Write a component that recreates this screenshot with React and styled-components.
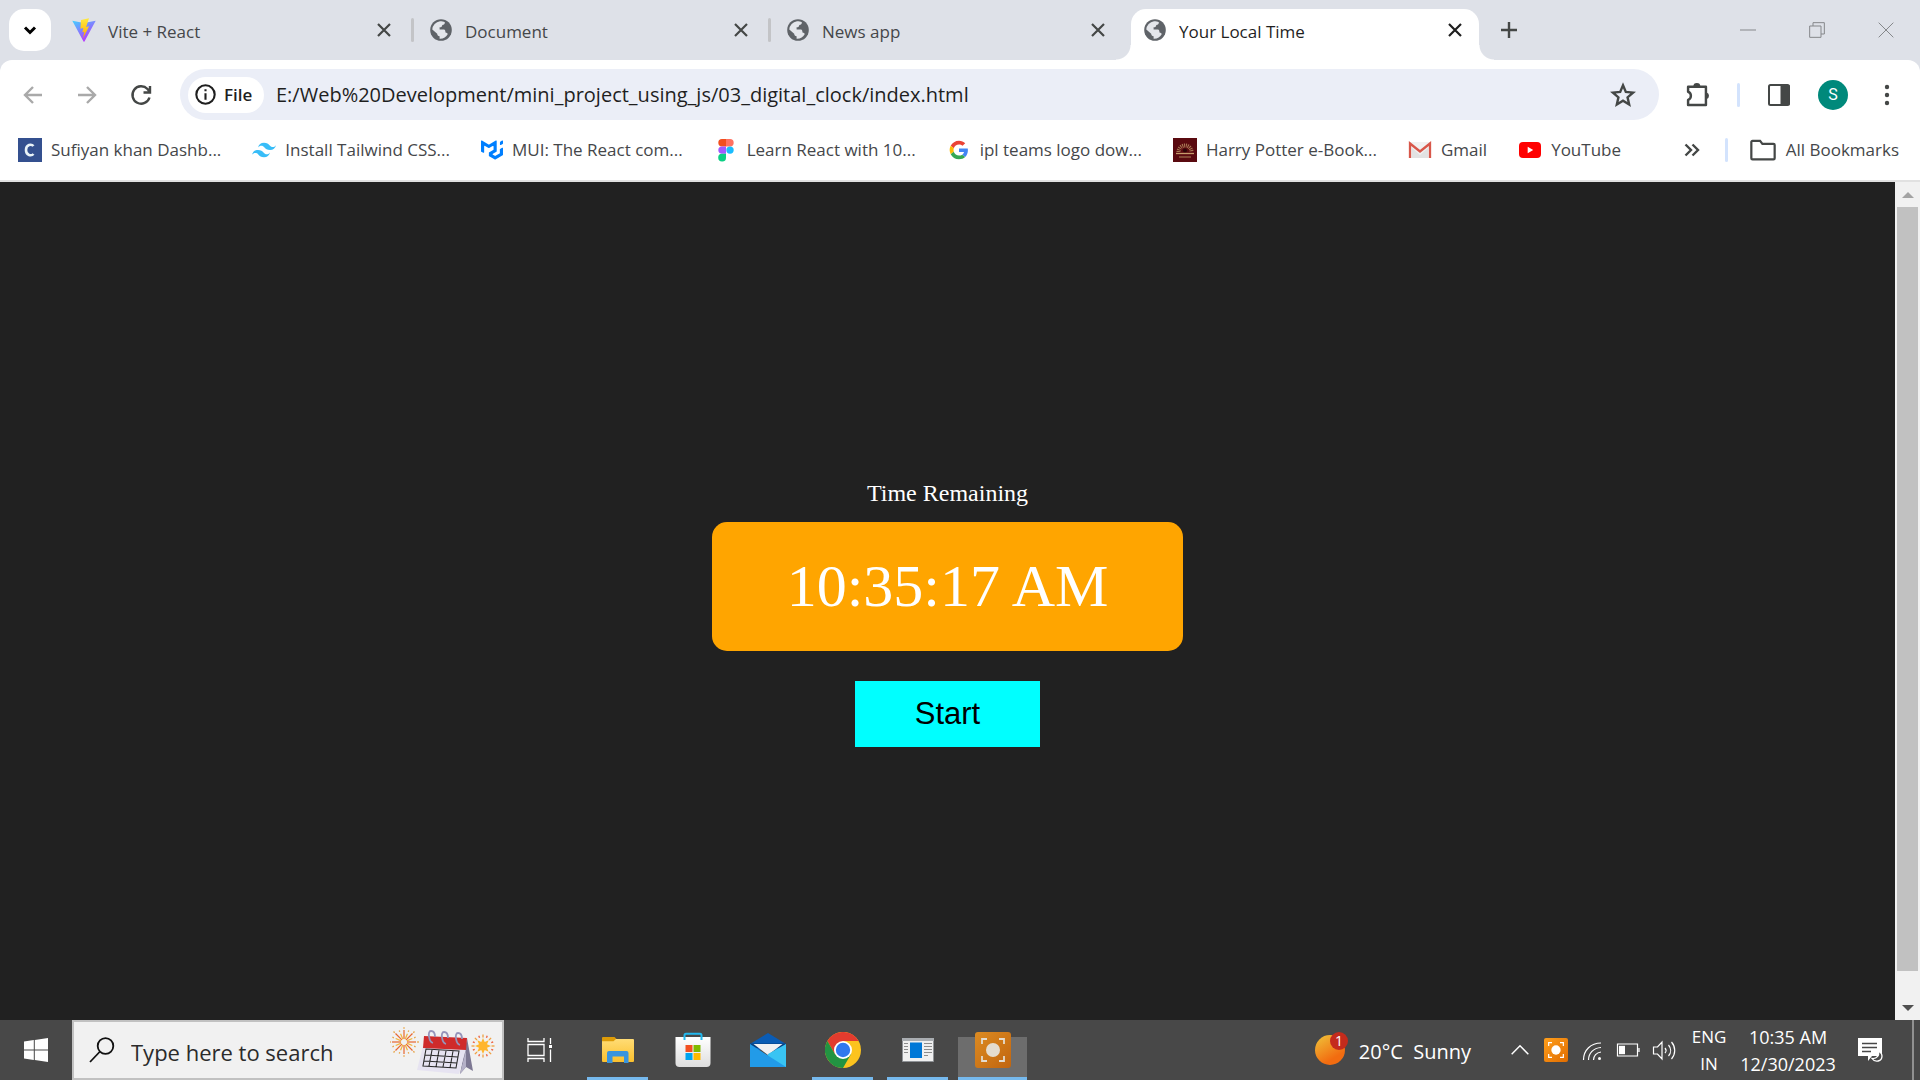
import React from "react";
import styled, { createGlobalStyle } from "styled-components";
import { SiMui } from "react-icons/si";

const GlobalStyle = createGlobalStyle`
  *, *::before, *::after { box-sizing: border-box; }
  body { margin: 0; font-family: "Open Sans", "Noto Sans", sans-serif; }
  button, input { font: inherit; color: inherit; }
  button { border: 0; padding: 0; background: none; }
  svg { display: block; flex: none; }
`;

const Desktop = styled.div`
  display: flex;
  flex-direction: column;
  height: 100vh;
  background: #212121;
  overflow: hidden;
`;

/* ---------- Tab strip ---------- */
const TabStrip = styled.header`
  display: flex;
  align-items: flex-end;
  height: 60px;
  flex: none;
  padding-left: 9px;
  background: #dee1e8;
`;
const TabSearch = styled.button`
  display: grid;
  place-items: center;
  width: 42px;
  height: 42px;
  margin-bottom: 9px;
  border-radius: 15px;
  background: #fff;
`;
const Tabs = styled.nav`
  display: flex;
  align-items: flex-end;
  flex: 0 1 1437px;
  min-width: 0;
  padding-left: 9px;
`;
const Tab = styled.div`
  position: relative;
  display: flex;
  align-items: center;
  gap: 12px;
  flex: 1 1 0;
  min-width: 0;
  height: 51px;
  padding: 0 12px 9px;
  color: ${(p) => (p.$active ? "#1f1f1f" : "#45474a")};
  background: ${(p) => (p.$active ? "#fff" : "transparent")};
  border-radius: 15px 15px 0 0;
  ${(p) =>
    p.$active &&
    `&::before, &::after {
      content: ""; position: absolute; bottom: 0; width: 15px; height: 15px;
    }
    &::before { right: 100%; background: radial-gradient(circle at 0 0, transparent 14px, #fff 15px); }
    &::after { left: 100%; background: radial-gradient(circle at 100% 0, transparent 14px, #fff 15px); }`}
`;
const TabTitle = styled.span`
  flex: 1;
  min-width: 0;
  padding-top: 3px;
  overflow: hidden;
  font-size: 17px;
  line-height: 24px;
  white-space: nowrap;
`;
const TabDivider = styled.span`
  flex: none;
  width: 3px;
  height: 24px;
  margin: 0 3px 18px;
  border-radius: 2px;
  background: ${(p) => (p.$hidden ? "transparent" : "#c3c4c7")};
`;
const IconButton = styled.button`
  display: grid;
  place-items: center;
  flex: none;
  width: ${(p) => p.$w || 24}px;
  height: ${(p) => p.$h || 24}px;
  color: ${(p) => p.$color || "#444746"};
`;
const WindowControls = styled.div`
  display: flex;
  margin-left: auto;
`;

/* ---------- Toolbar ---------- */
const Corners = styled.div`
  flex: none;
  background: #dee1e8;
`;
const Chrome = styled.div`
  background: #fff;
  border-radius: 12px 12px 0 0;
  border-bottom: 2px solid #e1e1e1;
`;
const Toolbar = styled.div`
  display: flex;
  align-items: center;
  height: 69px;
  padding: 0 6px;
`;
const AddressBar = styled.form`
  display: flex;
  align-items: center;
  flex: 1;
  height: 51px;
  margin: 0 12px;
  padding: 0 18px 0 8px;
  border-radius: 26px;
  background: #ebeef7;
`;
const FileChip = styled.button`
  display: flex;
  align-items: center;
  gap: 8px;
  width: 76px;
  height: 36px;
  padding-left: 7px;
  border-radius: 18px;
  background: #fff;
  color: #1f1f1f;
  font-size: 17px;
  font-weight: 600;
`;
const UrlInput = styled.input`
  flex: 1;
  min-width: 0;
  height: 36px;
  padding: 0 12px;
  border: 0;
  background: none;
  color: #1f1f1f;
  font-size: 20px;
`;
const BlueDivider = styled.span`
  flex: none;
  width: 3px;
  height: 24px;
  margin: 0 ${(p) => p.$right}px 0 ${(p) => p.$left}px;
  border-radius: 2px;
  background: #d3e3fd;
`;
const Avatar = styled.span`
  display: grid;
  place-items: center;
  width: 30px;
  height: 30px;
  border-radius: 50%;
  background: #00897b;
  color: #fff;
  font-family: Roboto, sans-serif;
  font-size: 16px;
`;
const BookmarksBar = styled.nav`
  display: flex;
  align-items: center;
  height: 51px;
  padding: 0 21px 9px 18px;
`;
const BookmarkList = styled.div`
  display: flex;
  flex: 1;
  gap: 31px;
  min-width: 0;
`;
const Bookmark = styled.a`
  display: flex;
  align-items: center;
  gap: 9px;
  color: #45474a;
  font-size: 17px;
  line-height: 24px;
  white-space: nowrap;
  text-decoration: none;
`;

/* ---------- Page ---------- */
const Viewport = styled.main`
  display: flex;
  flex: 1;
  min-height: 0;
`;
const Page = styled.section`
  display: flex;
  flex: 1;
  flex-direction: column;
  align-items: center;
  justify-content: center;
  color: #fff;
  font-family: "Liberation Serif", serif;
`;
const Caption = styled.p`
  margin: 24px 0 15px;
  font-size: 24px;
  line-height: 28px;
`;
const Clock = styled.time`
  padding: 30px 75px;
  border-radius: 15px;
  background: orange;
  font-size: 60px;
  line-height: 69px;
`;
const StartButton = styled.button`
  margin-top: 30px;
  padding: 15px 60px;
  background: cyan;
  color: #000;
  font-family: "Liberation Sans", sans-serif;
  font-size: 31px;
  line-height: 36px;
`;
const Scrollbar = styled.div`
  display: flex;
  flex-direction: column;
  width: 25px;
  padding: 0 2px;
  background: #f1f1f1;
`;
const ScrollArrow = styled.button`
  display: grid;
  place-items: center;
  height: 25px;
  flex: none;
  color: ${(p) => p.$color};
`;
const ScrollTrack = styled.div`
  flex: 1;
`;
const ScrollThumb = styled.div`
  height: 97%;
  background: #c1c1c1;
`;

/* ---------- Taskbar ---------- */
const Taskbar = styled.footer`
  display: flex;
  align-items: stretch;
  flex: none;
  height: 60px;
  background: #484848;
  color: #fff;
`;
const TaskButton = styled.button`
  display: grid;
  place-items: center;
  width: ${(p) => p.$w || 75}px;
`;
const SearchBox = styled.label`
  display: flex;
  align-items: center;
  gap: 16px;
  width: 432px;
  padding: 0 6px 0 15px;
  border: 2px solid #c1c1c1;
  background: #f1f1f1;
  color: #1f1f1f;
`;
const SearchInput = styled.input`
  flex: 1;
  min-width: 0;
  padding: 3px 0 0;
  border: 0;
  background: none;
  font-size: 22px;
  &::placeholder { color: #2b2b2b; opacity: 1; }
`;
const Apps = styled.div`
  display: flex;
  margin-left: 5px;
`;
const AppButton = styled.button`
  display: grid;
  place-items: center;
  width: ${(p) => (p.$active ? 69 : 61)}px;
  margin: 0 ${(p) => (p.$active ? 3 : 7)}px;
  padding-top: 3px;
  border-bottom: 3px solid ${(p) => (p.$open ? "#76b9ed" : "transparent")};
  background: ${(p) => (p.$active ? "linear-gradient(transparent 17px, #6d6d6d 17px)" : "none")};
`;
const Tray = styled.div`
  display: flex;
  align-items: center;
  margin-left: auto;
`;
const Weather = styled.button`
  display: flex;
  align-items: center;
  gap: 9px;
  margin-right: 31px;
  font-size: 20px;
`;
const WeatherText = styled.span`
  padding-top: 3px;
  white-space: pre;
`;
const TrayIcon = styled.button`
  display: grid;
  place-items: center;
  width: 36px;
  height: 60px;
`;
const TrayText = styled.button`
  display: flex;
  flex-direction: column;
  align-items: center;
  gap: 3px;
  width: ${(p) => p.$w}px;
  padding-top: 1px;
  font-size: ${(p) => p.$size}px;
  line-height: 24px;
  white-space: nowrap;
`;
const ShowDesktop = styled.button`
  width: 8px;
  height: 60px;
  margin-left: 12px;
  border-left: 2px solid #909090;
`;

/* ---------- Icons ---------- */
const Line = ({ s = 24, w = 2, children, ...rest }) => (
  <svg width={s} height={s} viewBox="0 0 24 24" fill="none" stroke="currentColor" strokeWidth={w} {...rest}>
    {children}
  </svg>
);
const CloseIcon = () => <Line s={24} w={2.2}><path d="M6 6l12 12M18 6L6 18" /></Line>;
const Globe = () => (
  <svg width="24" height="24" viewBox="0 0 24 24">
    <circle cx="12" cy="12" r="10.8" fill="#5f6368" />
    <path fill="#e4e6eb" d="M11 3.2c2 0 3.500.3 4.900 1-.1 1.800-.9 2.600-2.600 2.700-.2 1.800-1 2.400-2.700 2.300v2.300h4.200c1.500.2 1.600 1.600 1.700 3 1.200.1 1.900.6 2.300 1.600a8.800 8.800 0 0 1-8.200 4.700v-2.500c-1.600-.2-2.300-.9-2.400-2.500L3.300 11.500A8.800 8.800 0 0 1 11 3.200z" />
  </svg>
);
const ViteIcon = () => (
  <svg width="24" height="24" viewBox="0 0 24 24">
    <defs>
      <linearGradient id="vite" x1="0" y1="0" x2=".6" y2="1"><stop stopColor="#41d1ff" /><stop offset="1" stopColor="#bd34fe" /></linearGradient>
      <linearGradient id="bolt" x1="0" y1="0" x2="0" y2="1"><stop stopColor="#ffea3d" /><stop offset="1" stopColor="#ffa800" /></linearGradient>
    </defs>
    <path fill="url(#vite)" d="M.3 2.800 12 4.900l11.700-2.100L12.500 23.400a.6.6 0 0 1-1 0z" />
    <path fill="url(#bolt)" d="M17 .3 9 1.900 8.400 10.700l2.900-.6-.9 4.200 2-.6-1.500 6.800 6.200-12.200-3 .6z" />
  </svg>
);
const CIcon = () => (
  <svg width="24" height="24" viewBox="0 0 24 24">
    <path fill="#34508f" d="M0 0h24v24H0z" />
    <path d="M15.500 8C13.500 5.800 8 6.200 8 12s5.500 6.200 7.500 4" fill="none" stroke="#e9f3f8" strokeWidth="2.600" />
  </svg>
);
const TailwindIcon = () => (
  <svg width="24" height="24" viewBox="0 0 24 24" fill="#38bdf8">
    <path d="M12 4.800c-3.200 0-5.200 1.600-6 4.800 1.200-1.600 2.600-2.200 4.200-1.800.9.2 1.600.9 2.300 1.700C13.700 10.700 15 12 18 12c3.200 0 5.200-1.600 6-4.800-1.200 1.600-2.600 2.200-4.200 1.800-.9-.2-1.600-.9-2.300-1.700C16.300 6.100 15 4.800 12 4.800zM6 12c-3.200 0-5.200 1.600-6 4.800 1.200-1.600 2.600-2.200 4.200-1.800.9.2 1.600.9 2.300 1.700C7.700 17.900 9 19.200 12 19.200c3.200 0 5.200-1.600 6-4.800-1.200 1.600-2.600 2.200-4.200 1.800-.9-.2-1.600-.9-2.300-1.700C10.300 13.300 9 12 6 12z" />
  </svg>
);
const FigmaIcon = () => (
  <svg width="24" height="24" viewBox="0 0 24 24">
    <path fill="#f24e1e" d="M12 1H8a3.700 3.700 0 0 0 0 7.400h4z" />
    <path fill="#ff7262" d="M12 1h4a3.700 3.700 0 0 1 0 7.400h-4z" />
    <path fill="#a259ff" d="M12 8.400H8a3.700 3.700 0 0 0 0 7.400h4z" />
    <circle cx="16" cy="12.100" r="3.700" fill="#1abcfe" />
    <path fill="#0acf83" d="M8 15.800h4v3.700A3.900 3.900 0 1 1 8 15.800z" />
  </svg>
);
const GoogleIcon = () => (
  <svg width="24" height="24" viewBox="-7 -7 62 62">
    <path fill="#ea4335" d="M24 9.500c3.540 0 6.710 1.220 9.210 3.600l6.850-6.850C35.900 2.380 30.470 0 24 0 14.620 0 6.510 5.380 2.560 13.220l7.980 6.190C12.430 13.720 17.740 9.500 24 9.500z" />
    <path fill="#4285f4" d="M46.980 24.550c0-1.570-.15-3.090-.38-4.550H24v9.020h12.940c-.58 2.960-2.260 5.480-4.780 7.180l7.730 6c4.510-4.180 7.090-10.360 7.090-17.650z" />
    <path fill="#fbbc05" d="M10.530 28.590a14.500 14.500 0 0 1 0-9.180l-7.980-6.190a24 24 0 0 0 0 21.560z" />
    <path fill="#34a853" d="M24 48c6.480 0 11.930-2.130 15.890-5.810l-7.730-6c-2.150 1.450-4.920 2.300-8.160 2.300-6.260 0-11.570-4.220-13.470-9.910l-7.980 6.190C6.510 42.620 14.620 48 24 48z" />
  </svg>
);
const BookIcon = () => (
  <svg width="24" height="24" viewBox="0 0 24 24">
    <path fill="#5a0a10" d="M0 0h24v24H0z" />
    <path d="M5.500 14a6.500 6.500 0 1 1 13 0" fill="none" stroke="#a87854" strokeWidth="4" strokeDasharray="1 .8" />
    <circle cx="12" cy="12.500" r="2" fill="#2c0508" />
    <path d="M3 15.500h18" stroke="#c79c6c" strokeWidth="1.300" />
    <path d="M6 19h12" stroke="#9a6a4a" strokeWidth="1.300" />
  </svg>
);
const GmailIcon = () => (
  <svg width="24" height="24" viewBox="0 0 24 24">
    <path fill="#f1f1f1" d="M2 4h20v16H2z" />
    <path d="M4 10l8 7 8-7v10H4z" fill="#e2e2e2" />
    <path d="M2 20V5.500l10 8 10-8V20" fill="none" stroke="#d8574a" strokeWidth="2.300" />
  </svg>
);
const YoutubeIcon = () => (
  <svg width="24" height="24" viewBox="0 0 24 24">
    <rect x="1" y="4" width="22" height="16" rx="4" fill="#f00" />
    <path fill="#fff" d="M9.700 8.800v6.400l5.500-3.200z" />
  </svg>
);
const WindowsIcon = () => (
  <svg width="24" height="24" viewBox="0 0 24 24" fill="#fff">
    <path d="M0 3.400 9.800 2v9.500H0zM10.800 1.900 24 0v11.500H10.800zM0 12.500h9.800V22L0 20.600zM10.800 12.500H24V24l-13.200-1.900z" />
  </svg>
);
const SearchArt = () => (
  <svg width="106" height="52" viewBox="0 0 106 52">
    <g fill="none">
      {Array.from({ length: 16 }, (_, i) => (
        <path key={i} transform={`rotate(${i * 22.5} 14 18)`} d={i % 2 ? "M14 15V9" : "M14 15V6"} stroke={i % 2 ? "#f2b33c" : "#e8672f"} strokeWidth="1.200" />
      ))}
      {Array.from({ length: 16 }, (_, i) => (
        <path key={i} transform={`rotate(${i * 22.5} 14 18)`} d={i % 2 ? "M14 7V5.500" : "M14 4.800V3.200"} stroke="#e8a23f" strokeWidth="1.300" />
      ))}
      {Array.from({ length: 16 }, (_, i) => (
        <path key={i} transform={`rotate(${i * 22.5} 93 22)`} d={i % 2 ? "M93 13v-2" : "M93 13.500v-3"} stroke={i % 2 ? "#ee5b38" : "#f0a040"} strokeWidth="1.300" />
      ))}
    </g>
    <path fill="#ffb62e" d="M93 14l1.700 4 4-1.700-1.700 4 4 1.700-4 1.700 1.700 4-4-1.700-1.700 4-1.700-4-4 1.700 1.700-4-4-1.700 4-1.700-1.700-4 4 1.700z" />
    <path fill="#7d7893" d="m77 14 6 33-7-4-6 7z" />
    <path fill="#b5b1c8" d="m76 26-6 24 6-7z" />
    <path fill="#e6e3f1" d="M33 22l43 3-7 25-42-4z" />
    <path fill="#cf2b2b" d="m34 12 43 2-1 12-43-2z" />
    <path d="m36 25 33 2-3 17-33-2zM35 31l33 2M34 37l33 2M42 26l-3 16M49 26l-3 17M56 27l-3 16M63 27l-3 17" fill="none" stroke="#2a2a2a" strokeWidth="1.100" />
    <path d="M43 19c-4-1-6-12-2-12 3 0 4 3 4 6M56 20c-4-1-6-12-2-12 3 0 4 3 4 6M70 21c-4-1-6-12-2-12 3 0 4 3 4 6" fill="none" stroke="#9694ba" strokeWidth="1.800" />
  </svg>
);
const TaskViewIcon = () => (
  <svg width="26" height="26" viewBox="0 0 26 26" fill="none" stroke="#fff" strokeWidth="1.300">
    <path d="M1 1v3.500h16V1M1 25v-3.500h16V25M1 7.500h16v11H1zM23.500 1v6M23.500 12.500V25" />
    <path d="M22 8h3v3h-3z" fill="#fff" stroke="none" />
  </svg>
);
const FolderApp = () => (
  <svg width="34" height="28" viewBox="0 0 34 28">
    <defs><linearGradient id="fld" x1="0" y1="0" x2="0" y2="1"><stop stopColor="#ffdc75" /><stop offset="1" stopColor="#fbc02d" /></linearGradient></defs>
    <path fill="#dd9b07" d="M1 2a1 1 0 0 1 1-1h11.500l2 2-2 3H1z" />
    <path fill="url(#fld)" d="M1 5.200h11.500L15 3h17a1 1 0 0 1 1 1v21a1 1 0 0 1-1 1H2a1 1 0 0 1-1-1z" />
    <path fill="#3994de" d="M6 27V17a2 2 0 0 1 2-2h17.500a2 2 0 0 1 2 2v10H23v-6.500H11.500V27z" />
  </svg>
);
const StoreApp = () => (
  <svg width="36" height="36" viewBox="0 0 36 36">
    <defs><linearGradient id="bag" x1="0" y1="0" x2="0" y2="1"><stop stopColor="#fff" /><stop offset="1" stopColor="#dedede" /></linearGradient></defs>
    <path fill="url(#bag)" d="M.5 5h35v26a4 4 0 0 1-4 4h-27a4 4 0 0 1-4-4z" />
    <path d="M9.500 8V3.500C9.500 2.300 10 1.800 11 1.800h14c1 0 1.500.5 1.500 1.700V8" fill="none" stroke="#22b8ee" strokeWidth="2" />
    <path fill="#f25022" d="M10.500 13h7v7h-7z" /><path fill="#7fba00" d="M18.500 13h7v7h-7z" />
    <path fill="#00a4ef" d="M10.500 21h7v7h-7z" /><path fill="#ffb900" d="M18.500 21h7v7h-7z" />
  </svg>
);
const MailApp = () => (
  <svg width="36" height="34" viewBox="0 0 36 34">
    <path fill="#0a5cb5" d="M0 11 18 0l18 11v6H0z" />
    <path fill="#063f80" d="M0 10.500h36L32 15H4z" />
    <path fill="#f1f1f3" d="M3.500 11h29L18 22z" />
    <path fill="#39c4f3" d="M36 11v23H15l3-13z" />
    <path fill="#229be8" d="m0 11 36 23H0z" />
  </svg>
);
const ChromeApp = () => (
  <svg width="36" height="36" viewBox="0 0 36 36">
    <circle cx="18" cy="18" r="18" fill="#fcc31e" />
    <path fill="#e33b2e" d="M18 9h15.600A18 18 0 0 0 2.400 9l7.800 13.500L18 18z" />
    <path fill="#229342" d="M2.400 9A18 18 0 0 0 18 36l7.800-13.500L18 18l-7.800 4.500z" />
    <circle cx="18" cy="18" r="9" fill="#fff" /><circle cx="18" cy="18" r="7.200" fill="#3078ee" />
  </svg>
);
const WindowApp = () => (
  <svg width="32" height="24" viewBox="0 0 32 24">
    <path fill="#f0f0f0" stroke="#8f9296" d="M.5.5h31v23H.5z" /><path fill="#a9adb1" d="M0 0h32v3H0z" />
    <path fill="#0078d7" d="M8 4.500h12v15.500H8z" />
    <path d="M2 5.500h4M2 8.500h4M2 11.500h4M2 14.500h4M22 5.500h8M22 8.500h8M22 11.500h8M22 14.500h8M22 17.500h4" stroke="#8c8c8c" />
  </svg>
);
const RecorderIcon = ({ size = 36, bright }) => (
  <svg width={size} height={size} viewBox="0 0 36 36">
    <defs><linearGradient id={bright ? "recB" : "recA"} x1="0" y1="0" x2="1" y2="1">
      <stop stopColor={bright ? "#ff9f1c" : "#dc8b22"} /><stop offset="1" stopColor={bright ? "#e06c00" : "#c1650f"} /></linearGradient></defs>
    <rect width="36" height="36" rx="3" fill={`url(#${bright ? "recB" : "recA"})`} />
    <circle cx="18" cy="18" r="7" fill={bright ? "#fff" : "#e4dccf"} />
    <path d="M7 12V7h5M24 7h5v5M29 24v5h-5M12 29H7v-5" fill="none" stroke={bright ? "#fff" : "#e4dccf"} strokeWidth="1.800" />
  </svg>
);
const SunIcon = () => (
  <svg width="36" height="36" viewBox="0 0 36 36">
    <defs><linearGradient id="sun" x1=".1" y1="0" x2=".7" y2="1"><stop stopColor="#efc038" /><stop offset=".8" stopColor="#f26c10" /></linearGradient></defs>
    <circle cx="16" cy="18" r="15" fill="url(#sun)" /><circle cx="25" cy="9" r="9" fill="#c42b1c" />
    <text x="25" y="14" fill="#fff" fontSize="14" fontFamily="Open Sans" textAnchor="middle">1</text>
  </svg>
);

const tabs = [
  { title: "Vite + React", icon: <ViteIcon /> },
  { title: "Document", icon: <Globe /> },
  { title: "News app", icon: <Globe /> },
  { title: "Your Local Time", icon: <Globe />, active: true },
];
const bookmarks = [
  ["Sufiyan khan Dashb...", <CIcon />],
  ["Install Tailwind CSS...", <TailwindIcon />],
  ["MUI: The React com...", <SiMui size={22} color="#007fff" />],
  ["Learn React with 10...", <FigmaIcon />],
  ["ipl teams logo dow...", <GoogleIcon />],
  ["Harry Potter e-Book...", <BookIcon />],
  ["Gmail", <GmailIcon />],
  ["YouTube", <YoutubeIcon />],
];
const apps = [
  { name: "File Explorer", icon: <FolderApp />, open: true },
  { name: "Microsoft Store", icon: <StoreApp /> },
  { name: "Mail", icon: <MailApp /> },
  { name: "Google Chrome", icon: <ChromeApp />, open: true },
  { name: "Window", icon: <WindowApp />, open: true },
  { name: "Recorder", icon: <RecorderIcon />, open: true, active: true },
];

export default function App() {
  return (
    <Desktop>
      <GlobalStyle />
      <TabStrip>
        <TabSearch aria-label="Search tabs"><Line s={24} w={3}><path d="m7 9.500 5 5 5-5" /></Line></TabSearch>
        <Tabs>
          {tabs.map((t, i) => (
            <React.Fragment key={t.title}>
              <Tab $active={t.active}>
                {t.icon}
                <TabTitle>{t.title}</TabTitle>
                <IconButton aria-label={`Close ${t.title}`} $color={t.active ? "#1f1f1f" : "#444746"}><CloseIcon /></IconButton>
              </Tab>
              <TabDivider $hidden={i > 1} />
            </React.Fragment>
          ))}
        </Tabs>
        <IconButton aria-label="New tab" $w={42} $h={60}><Line s={24} w={2.4}><path d="M12 4v16M4 12h16" /></Line></IconButton>
        <WindowControls>
          <IconButton aria-label="Minimize" $w={69} $h={60} $color="#85878a"><Line s={16} w={1.5}><path d="M0 12h24" /></Line></IconButton>
          <IconButton aria-label="Restore" $w={69} $h={60} $color="#85878a"><Line s={16} w={1.5}><path d="M1 6h17v17H1zM6 6V1h17v17h-5" /></Line></IconButton>
          <IconButton aria-label="Close" $w={69} $h={60} $color="#85878a"><Line s={16} w={1.5}><path d="m1 1 22 22M23 1 1 23" /></Line></IconButton>
        </WindowControls>
      </TabStrip>

      <Corners>
        <Chrome>
          <Toolbar>
            <IconButton aria-label="Back" $w={54} $h={48} $color="#a9a9a9"><Line s={24} w={2.4}><path d="M21 12H4M12 4l-8 8 8 8" /></Line></IconButton>
            <IconButton aria-label="Forward" $w={54} $h={48} $color="#a9a9a9"><Line s={24} w={2.4}><path d="M3 12h17M12 4l8 8-8 8" /></Line></IconButton>
            <IconButton aria-label="Reload" $w={54} $h={48}><Line s={24} w={2.4}><path d="M20.500 14.500A8.700 8.700 0 1 1 18.500 6l2 2.500M21 3v6.500h-6.500" /></Line></IconButton>
            <AddressBar onSubmit={(e) => e.preventDefault()}>
              <FileChip type="button">
                <Line s={21} w={2.4}><circle cx="12" cy="12" r="10.500" /><path d="M12 10.500V18M12 6v2.400" /></Line>File
              </FileChip>
              <UrlInput aria-label="Address" defaultValue="E:/Web%20Development/mini_project_using_js/03_digital_clock/index.html" />
              <IconButton type="button" aria-label="Bookmark this page" $w={36} $h={36}>
                <Line s={26} w={2.2}><path d="m12 3 2.600 6.200 6.700.6-5.100 4.400 1.500 6.500L12 17.200l-5.700 3.500 1.500-6.500-5.100-4.400 6.700-.6z" /></Line>
              </IconButton>
            </AddressBar>
            <IconButton aria-label="Extensions" $w={54} $h={48}>
              <Line s={28} w={2.100}><path d="M3.500 5h15.300V20.500H3.500v-4.300c3.200-1 3.200-6 0-7z" strokeLinejoin="round" /><path fill="currentColor" stroke="none" d="M8 4.600a3 2.900 0 0 1 6 0zM19.500 9.800a3 3 0 0 1 0 5.600z" /></Line>
            </IconButton>
            <BlueDivider $left={12} $right={12} />
            <IconButton aria-label="Side panel" $w={54} $h={48}>
              <Line s={24} w={2}><rect x="2" y="2" width="20" height="20" rx="1.500" /><path fill="currentColor" d="M14.500 3h7v18h-7z" /></Line>
            </IconButton>
            <IconButton aria-label="Profile" $w={54} $h={48}><Avatar>S</Avatar></IconButton>
            <IconButton aria-label="Menu" $w={54} $h={48}>
              <Line s={24}><g fill="currentColor" stroke="none"><circle cx="12" cy="4" r="2.200" /><circle cx="12" cy="12" r="2.200" /><circle cx="12" cy="20" r="2.200" /></g></Line>
            </IconButton>
          </Toolbar>
          <BookmarksBar>
            <BookmarkList>
              {bookmarks.map(([name, icon]) => (
                <Bookmark key={name} href="#">{icon}{name}</Bookmark>
              ))}
            </BookmarkList>
            <IconButton aria-label="More bookmarks" $w={66}><Line s={24} w={2.400}><path d="m5.500 6.500 5.500 5.500-5.500 5.500M12.500 6.500l5.500 5.500-5.500 5.500" /></Line></IconButton>
            <BlueDivider $left={0} $right={21} />
            <Bookmark href="#">
              <Line s={28} w={1.900} color="#444746"><path d="M2 5.200a1 1 0 0 1 1-1h6.500l2 2.600H21a1 1 0 0 1 1 1V19a1 1 0 0 1-1 1H3a1 1 0 0 1-1-1z" /></Line>
              All Bookmarks
            </Bookmark>
          </BookmarksBar>
        </Chrome>
      </Corners>

      <Viewport>
        <Page>
          <Caption>Time Remaining</Caption>
          <Clock>10:35:17 AM</Clock>
          <StartButton>Start</StartButton>
        </Page>
        <Scrollbar>
          <ScrollArrow aria-label="Scroll up" $color="#a3a3a3"><svg width="12" height="6" viewBox="0 0 12 6"><path fill="currentColor" d="m6 0 6 6H0z" /></svg></ScrollArrow>
          <ScrollTrack><ScrollThumb /></ScrollTrack>
          <ScrollArrow aria-label="Scroll down" $color="#505050"><svg width="12" height="6" viewBox="0 0 12 6"><path fill="currentColor" d="m6 6 6-6H0z" /></svg></ScrollArrow>
        </Scrollbar>
      </Viewport>

      <Taskbar>
        <TaskButton aria-label="Start menu" $w={72}><WindowsIcon /></TaskButton>
        <SearchBox>
          <svg width="26" height="26" viewBox="0 0 26 26" fill="none" stroke="#111" strokeWidth="1.800"><circle cx="16.500" cy="9" r="7.800" /><path d="M11 14.500 1 25" /></svg>
          <SearchInput aria-label="Search" placeholder="Type here to search" />
          <SearchArt />
        </SearchBox>
        <TaskButton aria-label="Task view" $w={71}><TaskViewIcon /></TaskButton>
        <Apps>
          {apps.map((a) => (
            <AppButton key={a.name} aria-label={a.name} $open={a.open} $active={a.active}>{a.icon}</AppButton>
          ))}
        </Apps>
        <Tray>
          <Weather><SunIcon /><WeatherText>20°C  Sunny</WeatherText></Weather>
          <TrayIcon aria-label="Hidden icons"><Line s={20} w={1.800}><path d="m2 17 10-10 10 10" /></Line></TrayIcon>
          <TrayIcon aria-label="Recorder"><RecorderIcon size={24} bright /></TrayIcon>
          <TrayIcon aria-label="Network"><Line s={24} w={1.200}><path d="M3.500 22C3.500 12 11 5 21 5M8.500 22C8.500 15 13.500 10 21 9.500M13.500 22c0-4 3-7.500 7.500-8" /><circle cx="19.500" cy="20.500" r="1.500" fill="currentColor" stroke="none" /></Line></TrayIcon>
          <TrayIcon aria-label="Battery"><Line s={24} w={1.200}><path d="M1.500 6h20v12h-20zM23 10v4" /><path fill="currentColor" stroke="none" d="M3 7.800h6v8.400H3z" /></Line></TrayIcon>
          <TrayIcon aria-label="Volume"><Line s={24} w={1.200}><path d="M1.500 9h4l4.500-5v17l-4.500-5h-4zM13 10c1.300 1.500 1.300 3.500 0 5M16.500 7c2.800 3.300 2.800 7.700 0 11M19.500 4c4.300 5 4.300 12 0 17" /></Line></TrayIcon>
          <TrayText $w={54} $size={17}><span>ENG</span><span>IN</span></TrayText>
          <TrayText $w={104} $size={18}><span>10:35 AM</span><span>12/30/2023</span></TrayText>
          <TaskButton aria-label="Notifications" $w={60}>
            <svg width="26" height="26" viewBox="0 0 26 26"><path fill="#fff" d="M1 1h24v18H15l-4 5v-5H1z" /><path d="M5 6.500h15M5 10.500h15M5 14.500h9" stroke="#484848" strokeWidth="1.500" /><path d="M21 14c2 4-1 8-6 7.500 3 4.500 10 3 10-2.500 0-2-2-4.500-4-5z" fill="#484848" stroke="#fff" strokeWidth="1.300" /></svg>
          </TaskButton>
          <ShowDesktop aria-label="Show desktop" />
        </Tray>
      </Taskbar>
    </Desktop>
  );
}
